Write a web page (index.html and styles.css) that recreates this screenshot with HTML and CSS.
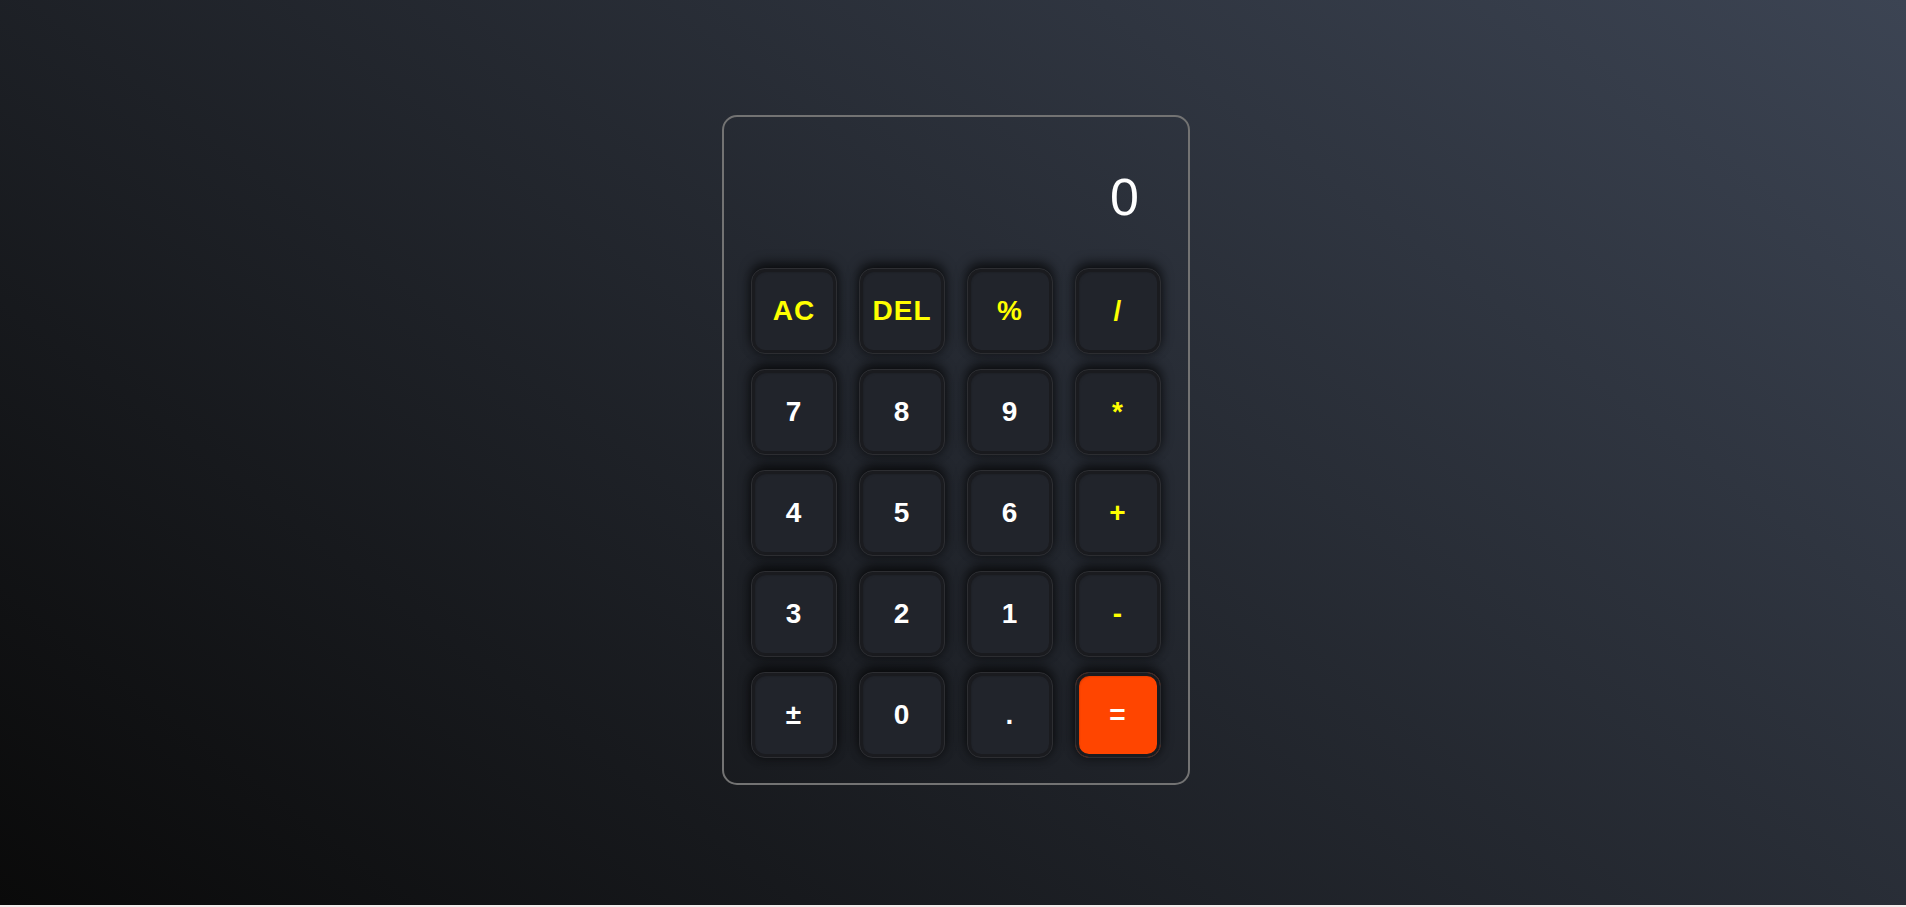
FILE: index.html
```html
<!DOCTYPE html>
<html lang="en">
<head>
<meta charset="utf-8">
<title>Calculator</title>
<link rel="stylesheet" href="styles.css">
</head>
<body>
<div class="calculator">
  <div class="display">0</div>
  <div class="keys">
    <button class="key op">AC</button>
    <button class="key op">DEL</button>
    <button class="key op">%</button>
    <button class="key op">/</button>
    <button class="key">7</button>
    <button class="key">8</button>
    <button class="key">9</button>
    <button class="key op">*</button>
    <button class="key">4</button>
    <button class="key">5</button>
    <button class="key">6</button>
    <button class="key op">+</button>
    <button class="key">3</button>
    <button class="key">2</button>
    <button class="key">1</button>
    <button class="key op">-</button>
    <button class="key">±</button>
    <button class="key">0</button>
    <button class="key">.</button>
    <button class="key equals">=</button>
  </div>
</div>
</body>
</html>
```
FILE: styles.css
```css
html {
  background: #f3ebeb;
}
body {
  margin: 0;
  height: calc(100vh - 2px);
  background: linear-gradient(37deg, #0a0a0a 0%, #3c4453 100%);
  display: flex;
  align-items: center;
  justify-content: center;
  font-family: "Liberation Sans", Arial, sans-serif;
}
.calculator {
  box-sizing: border-box;
  width: 468px;
  border: 2px solid #737373;
  border-radius: 15px;
  padding: 0 27px 25px;
  margin-left: 6px;
  margin-top: -5px;
}
.display {
  color: #ffffff;
  font-size: 52px;
  line-height: 60px;
  text-align: right;
  padding: 50px 22px 0;
  margin-bottom: 41px;
}
.keys {
  display: grid;
  grid-template-columns: repeat(4, 86px);
  grid-auto-rows: 86px;
  column-gap: 22px;
  row-gap: 15px;
}
.key {
  box-sizing: border-box;
  width: 86px;
  height: 86px;
  border: 1px solid #2d2e32;
  border-radius: 14px;
  background: #21242b;
  color: #ffffff;
  font-family: "Liberation Sans", Arial, sans-serif;
  font-weight: 700;
  font-size: 28px;
  letter-spacing: 1px;
  padding: 0;
  box-shadow:
    inset 0 0 0 3px #1a1b1f,
    inset 2px 2px 3px rgba(0, 0, 0, 0.5),
    0 -5px 12px rgba(0, 0, 0, 0.7),
    0 3px 8px rgba(0, 0, 0, 0.25);
}
.key.op {
  color: #ffff00;
}
.key.equals {
  background: #ff4500;
  color: #ffffff;
}
```
